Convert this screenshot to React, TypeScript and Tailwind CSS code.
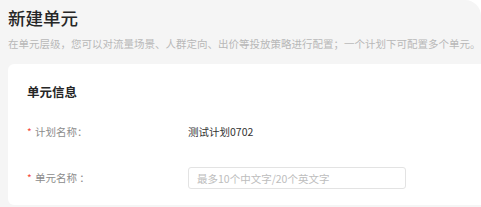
const font = { fontFamily: '"Noto Sans CJK SC", "Noto Sans", sans-serif' };

const FormRow = ({ label, children }: { label: string; children: React.ReactNode }) => (
  <div className="flex items-center">
    <div className="w-[161px] flex items-center text-[10.5px] text-[#8c8c8c]">
      <span className="text-[#f5483b] w-[8px] text-[10px] leading-none">*</span>
      <span>{label}</span>
    </div>
    {children}
  </div>
);

export default function App() {
  return (
    <div className="h-[207px] w-[481px] bg-white overflow-hidden" style={font}>
      <div className="h-full bg-[#f5f5f5] rounded-tr-[16px] pl-[8px] pt-[6px]">
        <h1 className="text-[17.5px] leading-[24px] font-medium text-[#262626]">新建单元</h1>
        <p className="mt-[6px] text-[10.5px] leading-[16px] text-[#b8b8b8]">
          在单元层级，您可以对流量场景、人群定向、出价等投放策略进行配置；一个计划下可配置多个单元。
        </p>
        <div className="mt-[12px] h-[141px] bg-white rounded-l-[6px] pl-[19px] pt-[18px]">
          <h2 className="text-[12.5px] leading-[20px] font-bold text-[#262626]">单元信息</h2>
          <div className="mt-[20px] flex flex-col gap-[25px]">
            <div className="h-[20px] flex items-center">
              <FormRow label="计划名称：">
                <span className="text-[10.5px] text-[#333333]">测试计划0702</span>
              </FormRow>
            </div>
            <FormRow label="单元名称 ：">
              <input
                className="w-[218px] h-[22px] border border-[#e3e3e3] rounded-[3px] px-[8px] text-[10.5px] outline-none placeholder:text-[#bdbdbd]"
                placeholder="最多10个中文字/20个英文字"
                style={font}
              />
            </FormRow>
          </div>
        </div>
      </div>
    </div>
  );
}
